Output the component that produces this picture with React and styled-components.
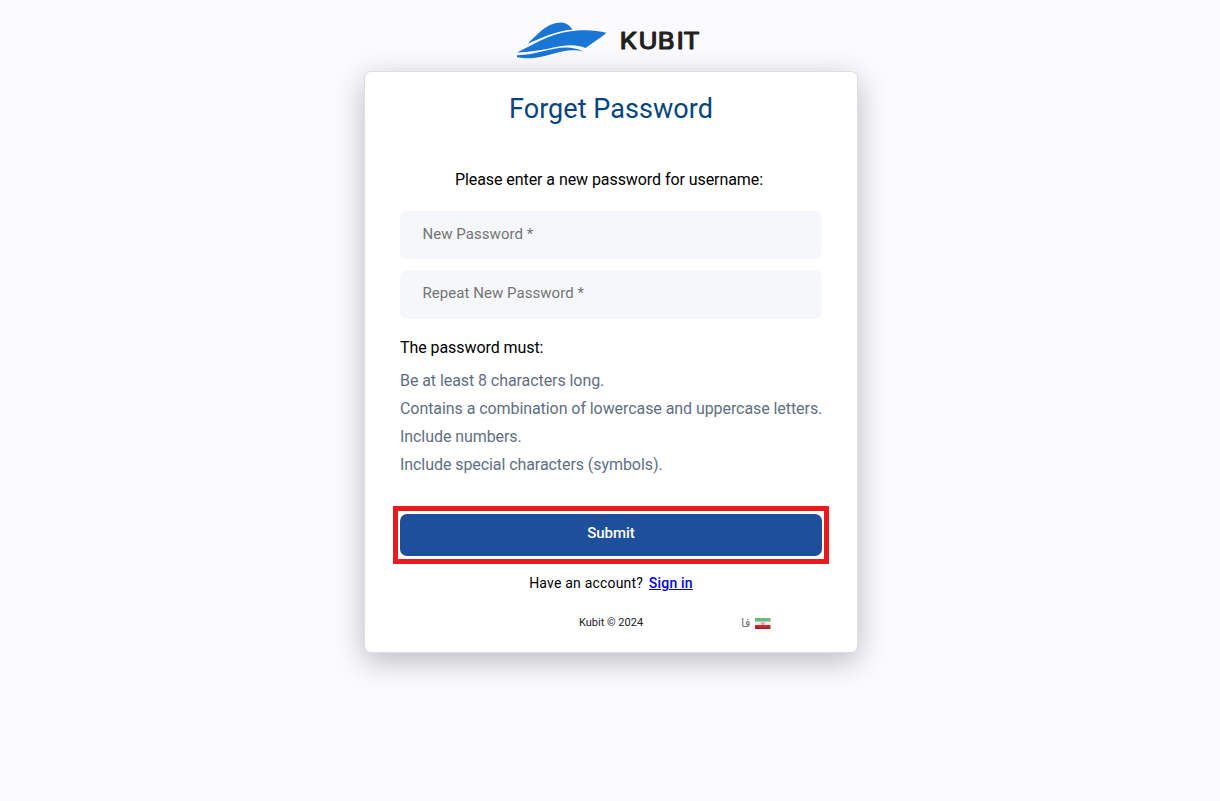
import React from 'react';
import styled, { createGlobalStyle } from 'styled-components';

const GlobalStyle = createGlobalStyle`
  * { box-sizing: border-box; }
  body {
    margin: 0;
    background: #fafaff;
    color: #000;
    font-family: Roboto, "Noto Sans", sans-serif;
    font-size: 16px;
    letter-spacing: -0.07px;
  }
`;

const Page = styled.main`
  display: flex;
  flex-direction: column;
  align-items: center;
  min-height: 801px;
  padding: 20px 0 0 2px;
`;

const Brand = styled.header`
  display: flex;
  height: 51px;
  padding-right: 2px;
`;

const Card = styled.form`
  display: flex;
  flex-direction: column;
  width: 494px;
  height: 581.5px;
  padding: 20px 35px 0;
  background: #fff;
  border: 1px solid #dedee1;
  border-radius: 7px;
  box-shadow: 0 8px 30px rgba(0, 0, 0, 0.26);
`;

const Title = styled.h1`
  margin: 0;
  color: #04457e;
  font-size: 27px;
  font-weight: 400;
  line-height: 34px;
  letter-spacing: 0.05px;
  text-align: center;
`;

const Intro = styled.p`
  margin: 42px 4px 0 0;
  line-height: 24px;
  text-align: center;
`;

const Fields = styled.div`
  display: grid;
  gap: 11px;
  margin-top: 18.5px;
`;

const Field = styled.input`
  width: 100%;
  height: 48.5px;
  padding: 0 22.5px 2px;
  border: 0;
  border-radius: 7px;
  background: #f5f7fb;
  font: inherit;
  font-size: 15px;
  letter-spacing: 0.05px;
  &::placeholder { color: #757575; opacity: 1; }
`;

const RulesTitle = styled.h2`
  margin: 17.5px 0 0;
  font-size: 16px;
  font-weight: 400;
  line-height: 24px;
`;

const Rules = styled.ul`
  margin: 7px 0 0;
  padding: 0;
  list-style: none;
  color: #5f6f82;
  line-height: 28px;
  white-space: nowrap;
`;

const SubmitFrame = styled.div`
  margin: 27px -7px 0;
  padding: 3px 2px;
  border: 5px solid #ea1b1e;
`;

const SubmitButton = styled.button`
  display: block;
  width: 100%;
  height: 41.5px;
  padding: 0 0 4.5px;
  border: 0;
  border-radius: 7px;
  background: #1e4f9b;
  color: #fff;
  font: 500 15px Roboto, sans-serif;
  letter-spacing: 0;
`;

const SignIn = styled.p`
  margin: 8.5px 0 0;
  font-size: 14px;
  line-height: 22px;
  letter-spacing: 0.2px;
  text-align: center;
`;

const SignInLink = styled.a`
  margin-left: 2px;
  color: #0000ee;
  font-weight: 500;
`;

const Footer = styled.footer`
  display: grid;
  grid-template-columns: 1fr auto 1fr;
  align-items: center;
  margin-top: 19px;
  font-size: 11px;
  line-height: 20px;
  letter-spacing: 0;
`;

const Copyright = styled.span`
  grid-column: 2;
  color: #222;
`;

const Language = styled.div`
  display: flex;
  align-items: center;
  justify-content: flex-end;
  gap: 4px;
  padding-right: 51.5px;
  color: #777;
`;

const LanguageName = styled.span`
  font-family: "DejaVu Sans", sans-serif;
  font-size: 12px;
`;

const Flag = () => (
  <svg width="16" height="12" viewBox="0 0 16 12">
    <defs>
      <linearGradient id="flagRed" x2="0" y2="1">
        <stop stopColor="#e02a30" />
        <stop offset="1" stopColor="#a91e24" />
      </linearGradient>
    </defs>
    <path fill="#70b77d" d="M0 1h15.5v4H0z" />
    <path fill="#eeeeee" d="M0 4.5h15.5V8H0z" />
    <path fill="url(#flagRed)" d="M0 8h15.5v4H0z" />
    <path fill="none" stroke="#e1797c" strokeWidth="0.9" d="M6.6 5.3c-.4 2 .3 2.2 1.2 2.2s1.6-.2 1.2-2.2M7.8 5v2.7" />
  </svg>
);

const Logo = () => (
  <svg width="188" height="44" viewBox="516 20 188 44" role="img" aria-label="Kubit">
    <g fill="#1976d5">
      <path d="M528 43.4C538 34 547 22.7 561 22.5c5 .1 8.5 2.8 11.5 7C556 31 543 37.5 528 43.4Z" />
      <path d="M517 52.5C531 46 550 33.5 569 31.5c14-2.2 27-1.4 37.5 1.3-6.3 5.4-14 10.4-21 15.2-18-8-36 3.5-68.5 4.5Z" />
      <path d="M517 55.2c24 .3 45-14.5 66-3.7-22-6-39 11-66 5.7Z" />
    </g>
    <text
      transform="translate(620.4 48.9) scale(1.14 1)"
      x="-0.6 15.8 32.8 49.5 55.2"
      y="0"
      fill="#231f20"
      stroke="#231f20"
      strokeWidth="1.2"
      strokeLinejoin="round"
      fontFamily="Inter, sans-serif"
      fontSize="22.4"
      fontWeight="400"
      letterSpacing="0"
    >
      KUBIT
    </text>
  </svg>
);

const requirements = [
  'Be at least 8 characters long.',
  'Contains a combination of lowercase and uppercase letters.',
  'Include numbers.',
  'Include special characters (symbols).',
];

export default function App() {
  return (
    <Page>
      <GlobalStyle />
      <Brand><Logo /></Brand>
      <Card onSubmit={(event) => event.preventDefault()}>
        <Title>Forget Password</Title>
        <Intro>Please enter a new password for username:</Intro>
        <Fields>
          <Field type="password" placeholder="New Password *" />
          <Field type="password" placeholder="Repeat New Password *" />
        </Fields>
        <RulesTitle>The password must:</RulesTitle>
        <Rules>
          {requirements.map((text) => <li key={text}>{text}</li>)}
        </Rules>
        <SubmitFrame>
          <SubmitButton type="submit">Submit</SubmitButton>
        </SubmitFrame>
        <SignIn>
          Have an account? <SignInLink href="#signin">Sign in</SignInLink>
        </SignIn>
        <Footer>
          <Copyright>Kubit © 2024</Copyright>
          <Language><LanguageName lang="fa">فا</LanguageName><Flag /></Language>
        </Footer>
      </Card>
    </Page>
  );
}
